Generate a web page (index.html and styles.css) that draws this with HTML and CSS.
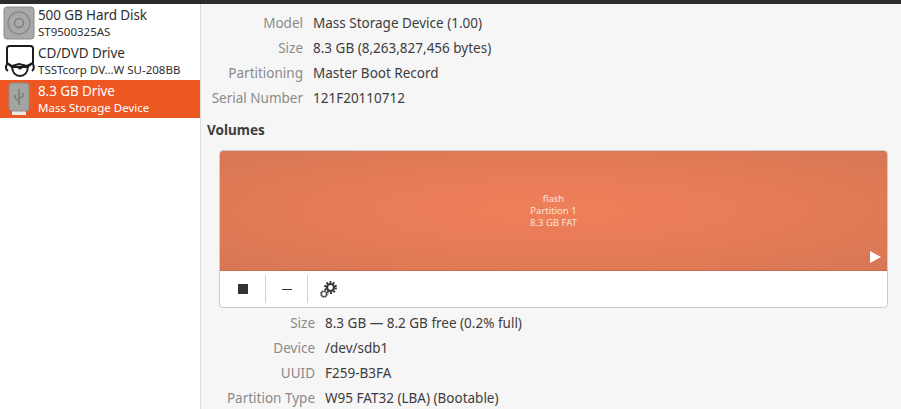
FILE: index.html
```html
<!DOCTYPE html>
<html lang="en">
<head>
    <meta charset="UTF-8">
    <title>Disks</title>
    <link rel="stylesheet" href="styles.css">
</head>

<body>
    <div class="topbar"></div>
    <div class="window">
        <div class="sidebar">
            <div class="drive">
                <svg class="drive-icon" width="32" height="34" viewBox="0 0 32 34">
                    <rect x="1" y="1" width="30" height="32" rx="3" fill="#a9a9a7" stroke="#8b8b89"/>
                    <circle cx="16" cy="17" r="11" fill="none" stroke="#8a8a88" stroke-width="1.5"/>
                    <circle cx="16" cy="17" r="4.5" fill="none" stroke="#7f7f7d" stroke-width="1.5"/>
                </svg>
                <div class="drive-text">
                    <div class="drive-name">500 GB Hard Disk</div>
                    <div class="drive-sub">ST9500325AS</div>
                </div>
            </div>
            <div class="drive">
                <svg class="drive-icon" width="32" height="34" viewBox="0 0 32 34">
                    <path d="M4 19V4.500Q4 2 6.500 2H27.500Q30 2 30 4.500V19L24 23H9Z" fill="none" stroke="#1c1c1c" stroke-width="2"/>
                    <path d="M4 19L9 22L16 20L24 22L30 19" fill="none" stroke="#1c1c1c" stroke-width="2"/>
                    <path d="M4 20Q1.500 25 5 27M30 20Q32 25 29 27M9 23Q10 32 17 32Q24 32 25 23" fill="none" stroke="#1c1c1c" stroke-width="2"/>
                    <path d="M14 23Q17 28 20 23Z" fill="#1c1c1c"/>
                </svg>
                <div class="drive-text">
                    <div class="drive-name">CD/DVD Drive</div>
                    <div class="drive-sub">TSSTcorp DV…W SU-208BB</div>
                </div>
            </div>
            <div class="drive selected">
                <svg class="drive-icon" width="32" height="34" viewBox="0 0 32 34">
                    <rect x="9" y="27" width="14" height="6" fill="#e9e9e7"/>
                    <rect x="8" y="1" width="20" height="28" rx="3" transform="translate(-2 0)" fill="#a3a3a0" stroke="#8c8c8a"/>
                    <path d="M16 7V23M16 19L12 16V13M16 17L20 14V11" fill="none" stroke="#7b7b79" stroke-width="1.500"/>
                </svg>
                <div class="drive-text">
                    <div class="drive-name">8.3 GB Drive</div>
                    <div class="drive-sub">Mass Storage Device</div>
                </div>
            </div>
        </div>

        <div class="content">
            <div class="info drive-info">
                <div class="label">Model</div><div class="value">Mass Storage Device (1.00)</div>
                <div class="label">Size</div><div class="value">8.3 GB (8,263,827,456 bytes)</div>
                <div class="label">Partitioning</div><div class="value">Master Boot Record</div>
                <div class="label">Serial Number</div><div class="value">121F20110712</div>
            </div>
            <h2>Volumes</h2>
            <div class="volume-card">
                <div class="partition">
                    <div class="partition-text">flash<br>Partition 1<br>8.3 GB FAT</div>
                    <div class="play"></div>
                </div>
                <div class="toolbar">
                    <div class="tool"><span class="stop"></span></div>
                    <div class="tool"><span class="minus"></span></div>
                    <div class="tool">
                        <svg width="17" height="17" viewBox="0 0 17 17">
                            <circle cx="10.500" cy="6.500" r="3.500" fill="none" stroke="#333" stroke-width="2.200"/>
                            <circle cx="10.500" cy="6.500" r="5.500" fill="none" stroke="#333" stroke-width="1.800" stroke-dasharray="2 1.450"/>
                            <circle cx="4" cy="13" r="2.500" fill="none" stroke="#444" stroke-width="1.200"/>
                            <circle cx="4" cy="13" r="3.600" fill="none" stroke="#444" stroke-width="1" stroke-dasharray="1.500 1.300"/>
                        </svg>
                    </div>
                </div>
            </div>
            <div class="info volume-info">
                <div class="label">Size</div><div class="value">8.3 GB — 8.2 GB free (0.2% full)</div>
                <div class="label">Device</div><div class="value">/dev/sdb1</div>
                <div class="label">UUID</div><div class="value">F259-B3FA</div>
                <div class="label">Partition Type</div><div class="value">W95 FAT32 (LBA) (Bootable)</div>
            </div>
        </div>
    </div>
</body>
</html>
```

FILE: styles.css
```css
html, body {
    height: 100%;
}
body {
    font-family: "Noto Sans", "Open Sans", sans-serif;
    font-size: 13.500px;
    color: #3d3d3d;
    background-color: #f6f6f7;
    margin: 0;
    overflow: hidden;
}
.topbar {
    height: 4px;
    background-color: #2c2c2c;
}
.window {
    display: flex;
    height: 405px;
}
.sidebar {
    width: 200px;
    flex-shrink: 0;
    background-color: #ffffff;
    border-right: 1px solid #dcdcdc;
}
.drive {
    display: flex;
    align-items: center;
    gap: 3px;
    height: 38px;
    padding-left: 3px;
    color: #2e2e2e;
}
.drive-icon {
    flex-shrink: 0;
}
.drive-name {
    font-size: 13.500px;
    line-height: 17px;
    letter-spacing: -0.1px;
}
.drive-sub {
    font-size: 11.500px;
    line-height: 15px;
    white-space: nowrap;
}
.selected {
    background-color: #ed5722;
    color: #ffffff;
}
.content {
    flex: 1;
    min-width: 0;
}
.info {
    display: grid;
    grid-template-columns: auto 1fr;
    column-gap: 10px;
    grid-auto-rows: 25px;
    align-items: center;
}
.drive-info {
    grid-template-columns: 102px 1fr;
    padding: 6px 0 0 0;
}
.volume-info {
    grid-template-columns: 114px 1fr;
    padding-top: 2px;
}
.label {
    color: #8a8a8a;
    text-align: right;
    white-space: nowrap;
}
.value {
    white-space: nowrap;
}
h2 {
    font-size: 13.500px;
    line-height: 17px;
    font-weight: 700;
    color: #3d3d3d;
    margin: 12px 0 11px 6px;
}
.volume-card {
    width: 667px;
    margin-left: 18px;
    background-color: #ffffff;
    border: 1px solid #c9cbce;
    border-radius: 4px;
    overflow: hidden;
}
.partition {
    position: relative;
    height: 119px;
    border-bottom: 1px solid #cf6a48;
    background: radial-gradient(ellipse at center, #ee7f59 0%, #e77c57 45%, #d67755 100%);
    display: flex;
    align-items: center;
    justify-content: center;
}
.partition-text {
    color: #fbe4da;
    font-size: 9.500px;
    line-height: 12px;
    text-align: center;
    padding-top: 1px;
}
.play {
    position: absolute;
    right: 6px;
    bottom: 7px;
    border-left: 11px solid #ffffff;
    border-top: 6px solid transparent;
    border-bottom: 6px solid transparent;
}
.toolbar {
    display: flex;
    height: 36px;
    align-items: center;
}
.tool {
    display: flex;
    align-items: center;
    justify-content: center;
    width: 45px;
    height: 28px;
    border-right: 1px solid #d2d2d2;
    margin-top: 0;
}
.tool:nth-child(2) {
    width: 41px;
}
.tool:last-child {
    border-right: none;
    width: 40px;
}
.stop {
    width: 10px;
    height: 10px;
    background-color: #333333;
}
.minus {
    width: 10px;
    height: 1px;
    background-color: #333333;
}
```
